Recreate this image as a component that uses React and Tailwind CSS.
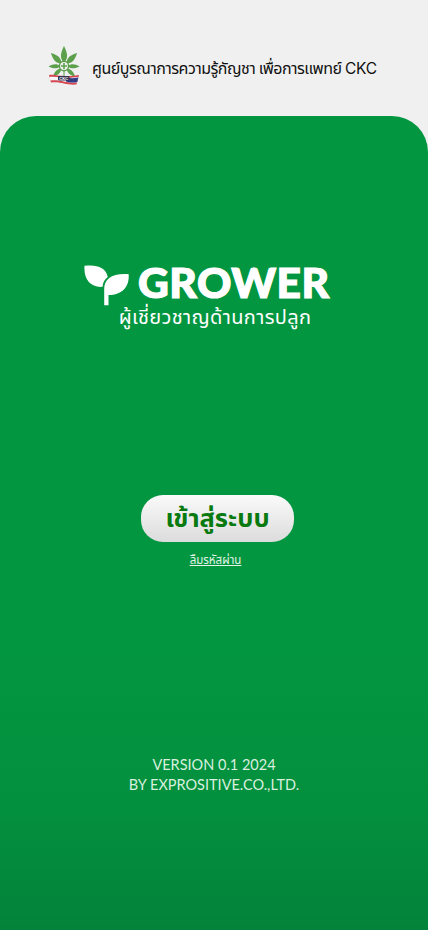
const thai = "font-['Noto_Sans','Noto_Sans_Thai',sans-serif]";

function CannabisLogo() {
  const top = "M0 -3 C-4.5 -8 -3.6 -13 0 -20 C3.6 -13 4.5 -8 0 -3Z";
  const diagonal = "M0 -3.5 C-4 -8 -3.4 -12 0 -18.5 C3.4 -12 4 -8 0 -3.500Z";
  const side = "M0 -4 C-3 -7 -2.4 -11 0 -15.5 C2.4 -11 3 -7 0 -4Z";
  return (
    <svg viewBox="0 0 32 40" className="h-10 w-8 shrink-0" aria-hidden="true">
      <g transform="translate(16 20)" fill="#5da04c">
        <path d={top} />
        {[-45, 45].map((a) => (
          <path key={a} d={diagonal} transform={`rotate(${a})`} />
        ))}
        {[-92, 92, -134, 134].map((a) => (
          <path key={a} d={side} transform={`rotate(${a})`} />
        ))}
        <circle r="5.4" />
        <circle r="3.9" fill="#f0f0f0" />
        <path d="M-3 0H3M0 -3V3" stroke="#5da04c" strokeWidth="1.6" />
        <path d="M0 5V11" stroke="#5da04c" strokeWidth="1" />
      </g>
      <path d="M1 29C8 28 14 32 31 29L28.500 38.500C18 39.500 13 35 3 36.500Z" fill="#d64550" />
      <path d="M1.500 31C9 30 15 33 30.500 31L29 36.500C18 37.500 12 33 2.500 34.500Z" fill="#f7f7fa" />
      <path d="M18 31.500C22 32.500 26 32.500 30.300 31.500L29.300 36C25 37 21 36.500 18 35.500Z" fill="#303c86" />
      <rect x="10" y="30" width="11.5" height="4.4" rx="1" fill="#35334f" />
      <text x="15.8" y="33.7" textAnchor="middle" fill="#fff" fontSize="4.2" fontWeight="700" fontFamily="Liberation Sans">CKC</text>
    </svg>
  );
}

function Sprout() {
  return (
    <svg viewBox="0 0 46 42" className="h-[42px] w-[46px] shrink-0" fill="#fff" aria-hidden="true">
      <path d="M.5 .8C12-.8 22 2 23.800 12C20.500 14.500 18.800 17.500 18.600 21.800C7 22.800-.5 15 .5 .8Z" />
      <path d="M44.700 9.200C45.500 22 38 30 24.500 30V40.300H20.200V24C20.200 14 28 8 44.700 9.200Z" />
    </svg>
  );
}

export default function App() {
  return (
    <div className="flex h-[930px] w-full flex-col overflow-hidden bg-[#f0f0f0]">
      <header className="flex h-[116px] shrink-0 items-start pl-12 pt-[46px]">
        <CannabisLogo />
        <h1 className={`${thai} ml-3 mt-[8px] whitespace-nowrap text-[16px] leading-7 tracking-[-0.52px] text-[#111]`}>
          ศูนย์บูรณาการความรู้กัญชา เพื่อการแพทย์{" "}
          <span className="font-['Inter',sans-serif] text-[15.5px] tracking-[-0.3px]">CKC</span>
        </h1>
      </header>
      <main className="flex flex-1 flex-col items-center rounded-t-[36px] bg-linear-to-b from-[#039640] from-65% via-[#03903e] via-85% to-[#03833a]">
        <div className="mt-[149px] flex h-[42px] w-[260px] items-start">
          <Sprout />
          <span className="ml-2 mt-[-5px] whitespace-nowrap font-['Lato',sans-serif] text-[42.5px] font-black leading-[44px] tracking-[0.5px] text-white [-webkit-text-stroke:1.2px_white]">GROWER</span>
        </div>
        <p className={`${thai} mt-[-6px] ml-[2px] whitespace-nowrap text-[20px] leading-8 tracking-[0.35px] text-white`}>ผู้เชี่ยวชาญด้านการปลูก</p>
        <button className={`${thai} ml-[7px] mt-[162px] h-[47px] w-[153px] rounded-[22px] bg-linear-to-b from-[#fafafa] to-[#dcdcdc] pb-[2px] text-[25.5px] font-bold leading-[45px] text-[#087a10]`}>
          เข้าสู่ระบบ
        </button>
        <a className={`${thai} ml-[3px] mt-2 whitespace-nowrap text-[11.5px] leading-5 text-[#e2f3e7] underline`}>ลืมรหัสผ่าน</a>
        <p className="mt-auto mb-[135px] whitespace-nowrap text-center font-['Lato',sans-serif] text-[14.5px] leading-5 text-[#d9efdf]">
          VERSION 0.1 2024
          <br />
          BY EXPROSITIVE.CO.,LTD.
        </p>
      </main>
    </div>
  );
}
